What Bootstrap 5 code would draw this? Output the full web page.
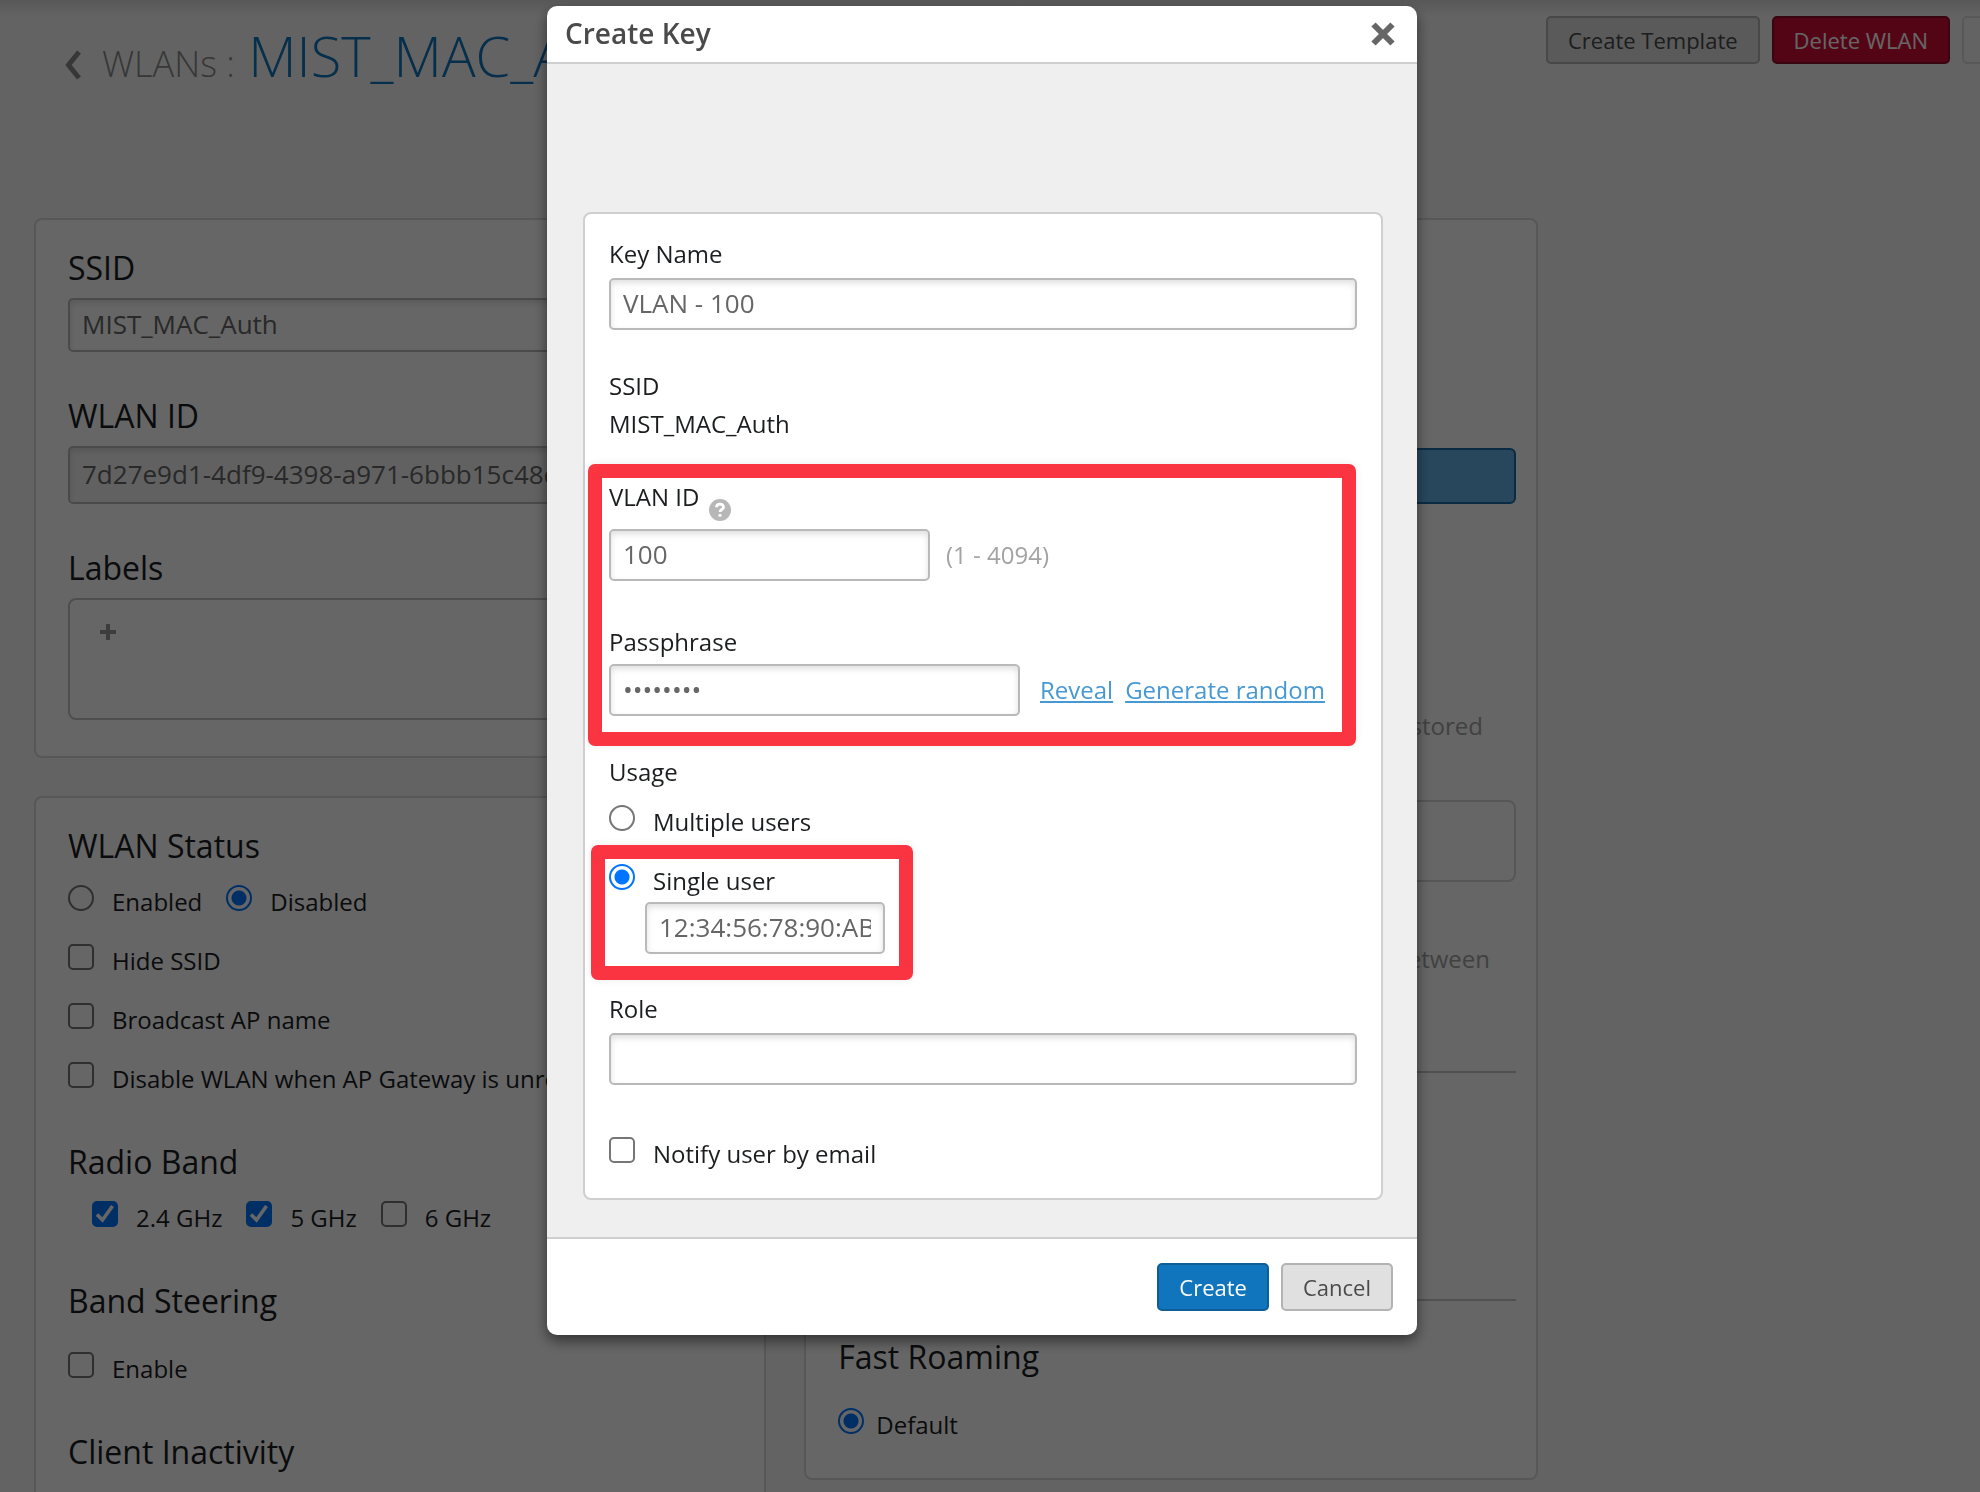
<!DOCTYPE html>
<html lang="en">
<head>
<meta charset="utf-8">
<meta name="viewport" content="width=device-width, initial-scale=1">
<title>WLANs : MIST_MAC_Auth</title>
<link href="https://cdn.jsdelivr.net/npm/bootstrap@5.3.0/dist/css/bootstrap.min.css" rel="stylesheet">
<style>
  body { font-family: "Open Sans", "Noto Sans", sans-serif; font-size: 24px; line-height: 38px; color: #1b1d1f; background: #f7f7f7; height: 100vh; }

  /* page header */
  .page-top { height: 218px; padding: 16px 0 0 64px; overflow: hidden; background: linear-gradient(#dcdcdc, #f7f7f7 16px); }
  .page-title { gap: 20px; font-size: 36px; font-weight: 300; line-height: 78px; color: #8a8a8a; margin: 0; }
  .page-title strong { font-size: 56px; font-weight: 300; color: #1175bd; }
  .top-actions { gap: 12px; margin-right: -70px; }
  .btn-app { --bs-btn-font-size: 22px; --bs-btn-line-height: 28px; --bs-btn-padding-y: 8px; --bs-btn-padding-x: 20px; --bs-btn-border-width: 2px; --bs-btn-border-radius: 5px; white-space: nowrap; }
  .btn-gray { --bs-btn-bg: #e0e0e0; --bs-btn-color: #4a4a4a; --bs-btn-border-color: #b3b3b3; }
  .btn-faint { --bs-btn-bg: #f7f7f7; --bs-btn-color: #aaa; --bs-btn-border-color: #ddd; width: 88px; }
  .btn-red { --bs-btn-bg: #d00e37; --bs-btn-color: #fff; --bs-btn-border-color: #8c1029; }
  .btn-blue { --bs-btn-bg: #1175bd; --bs-btn-color: #fff; --bs-btn-border-color: #0e5e98; }

  /* settings panels */
  .columns { padding-left: 34px; gap: 38px; max-width: 1538px; }
  .column { flex: 1 1 50%; min-width: 0; gap: 38px; }
  .panel { background: #fff; border: 2px solid #dadada; border-radius: 8px; padding: 26px 32px 36px; }
  .panel-right { padding: 228px 20px 32px 32px; }
  .panel h2, .big-label { font-size: 32px; font-weight: 400; line-height: 44px; margin: 0; color: #1b1d1f; }
  .block-gap { margin-bottom: 42px; }
  .section-gap { margin-bottom: 40px; }
  .rows-top { padding-top: 17px; }
  .rows-far { padding-top: 29px; }
  .tags-box { height: 122px; border: 2px solid #c4c4c4; border-radius: 8px; padding: 24px 30px; line-height: 0; }
  .choice-blue { height: 56px; background: #64b1e8; border: 2px solid #1a6cab; border-radius: 6px; margin-bottom: 203px; }
  .hint { color: #a3a3a3; }
  .hint-stored { margin-bottom: 55px; padding-right: 33px; }
  .hint-range { margin-bottom: 93px; padding-right: 26px; }
  .note-box { height: 82px; border: 2px solid #d6d6d6; border-radius: 8px; margin-bottom: 58px; }
  .rule { border: 0; height: 2px; background: #c8c8c8; opacity: 1; margin: 0 0 226px; }
  .rule-last { margin-bottom: 34px; }

  /* form controls */
  .input-app { font-size: 26px; line-height: 36px; padding: 5px 12px 7px; height: 52px; color: #666; border: 2px solid #b9b9b9; border-radius: 5px; background: #fff; box-shadow: inset 0 3px 6px rgba(0,0,0,.13); }
  .input-app:disabled { background: #f3f3f3; height: 58px; }
  .input-tall { height: 54px; }
  .choices { gap: 24px; }
  .tick-row { display: flex; align-items: flex-start; gap: 18px; min-height: 38px; }
  .tick-near { gap: 12px; }
  .tick-row label { line-height: 34px; white-space: nowrap; }
  .tick-row input { appearance: none; flex: none; width: 26px; height: 26px; margin: 0; border: 2px solid #767676; border-radius: 5px; background: #fff center / 26px no-repeat; background-origin: border-box; }
  .tick-row input[type=radio] { border-radius: 50%; }
  .tick-row input[type=radio]:checked { border-color: #0075ff; background-image: radial-gradient(circle, #0075ff 7px, transparent 8px); }
  .tick-row input[type=checkbox]:checked { border-color: #0075ff; background-color: #0075ff; background-image: url("data:image/svg+xml,%3Csvg xmlns='http://www.w3.org/2000/svg' viewBox='0 0 26 26'%3E%3Cpath d='M5 13.500l5.500 5.500L20.500 5' fill='none' stroke='%23fff' stroke-width='3.600'/%3E%3C/svg%3E"); }
  .status-rows { gap: 21px; }
  .icon-btn { background: none; border: 0; padding: 0; line-height: 0; }

  /* create key dialog */
  .modal-backdrop { --bs-backdrop-opacity: .6; }
  .key-modal { padding-right: 16px; }
  .key-dialog { max-width: 870px; margin: 6px auto; }
  .key-content { border: 0; border-radius: 10px; box-shadow: 0 6px 14px rgba(0,0,0,.5); color: #1b1d1f; }
  .key-head { padding: 0 22px 0 18px; height: 58px; border-bottom: 2px solid #cfcfcf; }
  .key-head h1 { font-size: 28px; font-weight: 600; line-height: 38px; padding-bottom: 2px; color: #4a4a4a; margin: 0; }
  .key-body { background: #efefef; padding: 148px 34px 37px 36px; }
  .key-foot { height: 98px; padding: 0 24px; gap: 12px; border-top: 2px solid #cfcfcf; border-radius: 0 0 10px 10px; }
  .key-foot > * { margin: 0; }
  .key-card { background: #fff; border: 2px solid #cfcfcf; border-radius: 8px; padding: 21px 24px 23px; }
  .key-card > * { display: block; }
  .field-label { display: block; line-height: 38px; margin-bottom: 5px; }
  .label-tight { margin-bottom: 3px; }
  .field-gap { margin-bottom: 37px; }
  .help-row { gap: 10px; height: 51px; }
  .help-row svg { margin-top: 21px; }
  .vlan-gap { margin-bottom: 42px; }
  .usage-rows { display: flex; flex-direction: column; gap: 21px; padding-top: 14px; margin-bottom: 36px; }
  .notify-row { padding-top: 52px; }
  .outlined { position: relative; }
  .outlined::before { content: ""; position: absolute; border: 14px solid #fb3442; border-radius: 7px; pointer-events: none; box-shadow: 0 0 8px rgba(0,0,0,.08); }
  .outline-wide { margin-top: 35px; }
  .outline-wide::before { inset: -14px 1px -30px -21px; }
  .outline-user::before { inset: -19px auto -26px -18px; width: 322px; }
  .w-id { width: 321px; }
  .w-pass { width: 411px; margin-right: 20px; }
  .w-mac { display: block; width: 240px; margin-left: 36px; }
  .key-card a { color: #4799d4; margin-right: 12px; }
</style>
</head>
<body class="overflow-hidden">

<header class="page-top d-flex justify-content-between align-items-start">
  <h1 class="page-title d-flex align-items-baseline">
    <a href="#" aria-label="Back"><svg width="18" height="36" viewBox="0 0 18 36"><path d="M15 3L4.500 16L15 29" fill="none" stroke="#8a8a8a" stroke-width="5"/></svg></a>
    <span>WLANs : <strong class="ms-1">MIST_MAC_Auth</strong></span>
  </h1>
  <div class="top-actions d-flex">
    <button type="button" class="btn btn-app btn-gray">Create Template</button>
    <button type="button" class="btn btn-app btn-red">Delete WLAN</button>
    <button type="button" class="btn btn-app btn-faint" aria-label="Save"></button>
  </div>
</header>

<main class="columns d-flex align-items-start">
  <div class="column d-flex flex-column">
    <section class="panel">
      <label class="big-label d-block pb-2" for="ssid">SSID</label>
      <input id="ssid" class="input-app input-tall d-block w-100 block-gap" value="MIST_MAC_Auth">
      <label class="big-label d-block pb-2" for="wlanid">WLAN ID</label>
      <input id="wlanid" class="input-app d-block w-100 block-gap" value="7d27e9d1-4df9-4398-a971-6bbb15c48e20" disabled>
      <h2 class="pb-2">Labels</h2>
      <div class="tags-box"><button type="button" class="icon-btn" aria-label="Add label"><svg width="16" height="16" viewBox="0 0 16 16"><path d="M8 0V16M0 8H16" stroke="#999" stroke-width="4"/></svg></button></div>
    </section>

    <section class="panel">
      <h2>WLAN Status</h2>
      <div class="status-rows rows-top section-gap d-flex flex-column">
        <div class="choices d-flex">
          <div class="tick-row"><input type="radio" name="status" id="on"><label for="on">Enabled</label></div>
          <div class="tick-row"><input type="radio" name="status" id="off" checked><label for="off">Disabled</label></div>
        </div>
        <div class="tick-row"><input type="checkbox" id="hide"><label for="hide">Hide SSID</label></div>
        <div class="tick-row"><input type="checkbox" id="bcast"><label for="bcast">Broadcast AP name</label></div>
        <div class="tick-row"><input type="checkbox" id="gw"><label for="gw">Disable WLAN when AP Gateway is unreachable</label></div>
      </div>
      <h2>Radio Band</h2>
      <div class="choices d-flex ps-4 rows-top section-gap">
        <div class="tick-row"><input type="checkbox" id="b2" checked><label for="b2">2.4 GHz</label></div>
        <div class="tick-row"><input type="checkbox" id="b5" checked><label for="b5">5 GHz</label></div>
        <div class="tick-row"><input type="checkbox" id="b6"><label for="b6">6 GHz</label></div>
      </div>
      <h2>Band Steering</h2>
      <div class="rows-far section-gap">
        <div class="tick-row"><input type="checkbox" id="steer"><label for="steer">Enable</label></div>
      </div>
      <h2>Client Inactivity</h2>
    </section>
  </div>

  <section class="column panel panel-right">
    <div class="choice-blue"></div>
    <p class="hint hint-stored text-end">stored</p>
    <div class="note-box"></div>
    <p class="hint hint-range text-end">between</p>
    <hr class="rule">
    <hr class="rule rule-last">
    <h2>Fast Roaming</h2>
    <div class="rows-far">
      <div class="tick-row tick-near"><input type="radio" name="roam" id="dflt" checked><label for="dflt">Default</label></div>
    </div>
  </section>
</main>

<div class="modal-backdrop show"></div>
<div class="modal key-modal d-block" tabindex="-1" role="dialog" aria-labelledby="keyTitle">
  <div class="modal-dialog key-dialog">
    <form class="modal-content key-content">
      <div class="modal-header key-head">
        <h1 id="keyTitle">Create Key</h1>
        <button type="button" class="icon-btn" aria-label="Close"><svg width="24" height="24" viewBox="0 0 24 24"><path d="M2.500 2.500L21.500 21.500M21.500 2.500L2.500 21.500" stroke="#666" stroke-width="6"/></svg></button>
      </div>
      <div class="modal-body key-body">
        <div class="key-card">
          <label class="field-label" for="kname">Key Name</label>
          <input id="kname" class="input-app w-100 field-gap" value="VLAN - 100">
          <div>SSID</div>
          <div>MIST_MAC_Auth</div>
          <div class="outlined outline-wide field-gap">
            <div class="help-row d-flex align-items-start"><label class="field-label" for="vlan">VLAN ID</label>
              <svg width="22" height="22" viewBox="0 0 22 22" role="img" aria-label="Help"><circle cx="11" cy="11" r="11" fill="#b7b7b7"/><path d="M7.500 8.200C7.500 4 14.500 4 14.500 8.200C14.500 10.500 11 10.500 11 13" fill="none" stroke="#fff" stroke-width="2.800"/><circle cx="11" cy="16.300" r="1.600" fill="#fff"/></svg></div>
            <div class="d-flex align-items-center vlan-gap"><input id="vlan" class="input-app w-id" value="100"><span class="hint ms-3">(1 - 4094)</span></div>
            <label class="field-label label-tight" for="pass">Passphrase</label>
            <div class="d-flex align-items-center"><input id="pass" type="password" class="input-app w-pass" value="password"><a href="#">Reveal</a><a href="#">Generate random</a></div>
          </div>
          <div>Usage</div>
          <div class="usage-rows">
            <div class="tick-row"><input type="radio" name="usage" id="multi"><label for="multi">Multiple users</label></div>
            <div class="outlined outline-user">
              <div class="tick-row"><input type="radio" name="usage" id="single" checked><label for="single">Single user</label></div>
              <input class="input-app w-mac" aria-label="MAC address" value="12:34:56:78:90:AB">
            </div>
          </div>
          <label class="field-label" for="role">Role</label>
          <input id="role" class="input-app w-100">
          <div class="notify-row">
            <div class="tick-row"><input type="checkbox" id="mail"><label for="mail">Notify user by email</label></div>
          </div>
        </div>
      </div>
      <div class="modal-footer key-foot">
        <button type="submit" class="btn btn-app btn-blue">Create</button>
        <button type="button" class="btn btn-app btn-gray">Cancel</button>
      </div>
    </form>
  </div>
</div>
<script src="https://cdn.jsdelivr.net/npm/bootstrap@5.3.0/dist/js/bootstrap.bundle.min.js"></script>
</body>
</html>
